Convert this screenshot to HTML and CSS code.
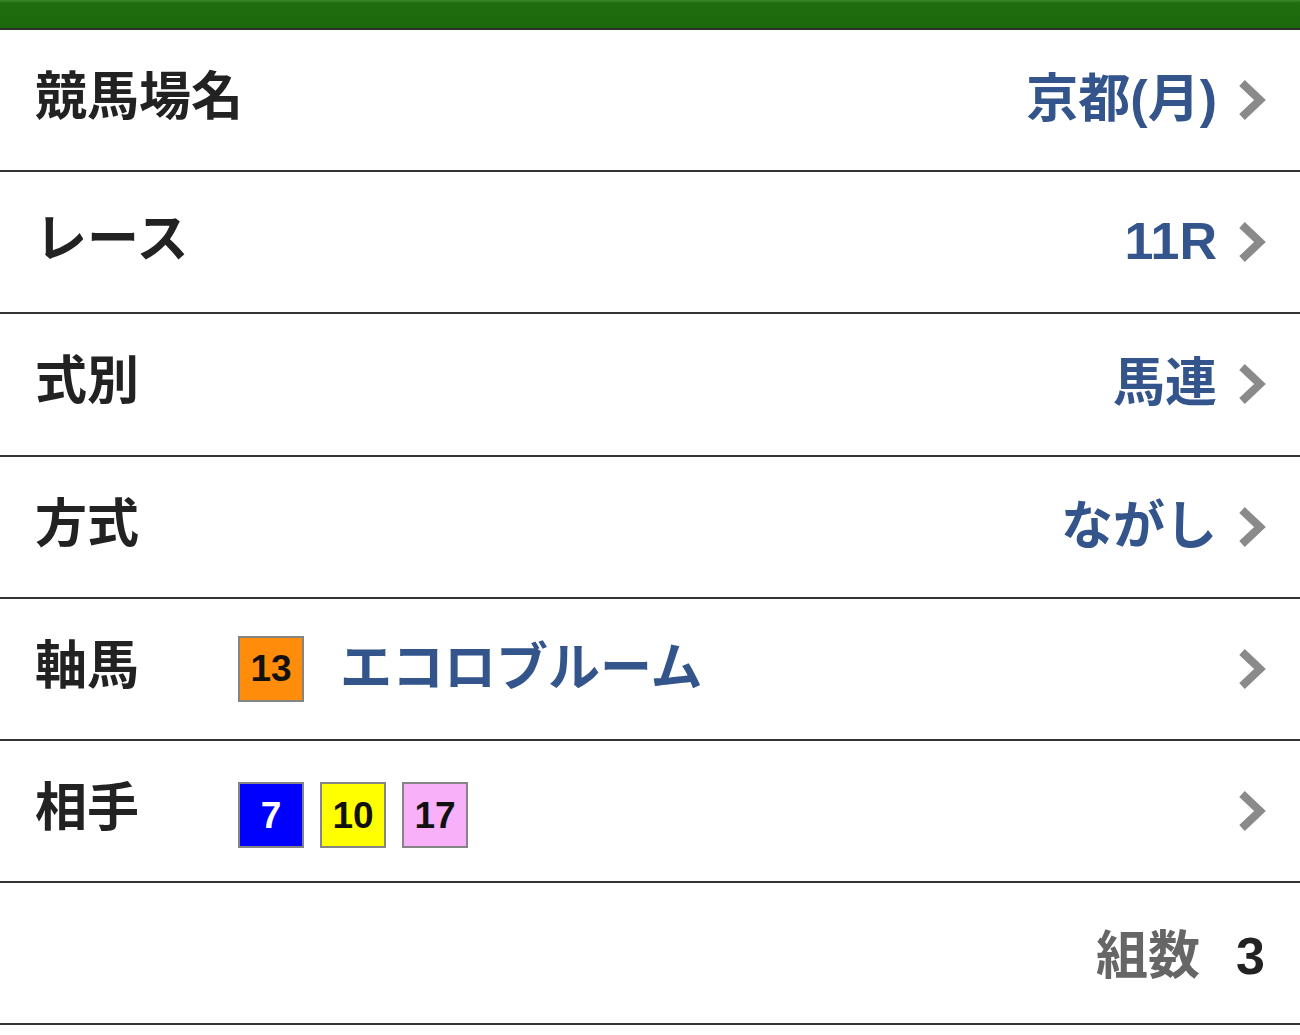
FILE: index.html
```html
<!DOCTYPE html>
<html lang="ja">
<head>
<meta charset="utf-8">
<title>馬券</title>
<link rel="stylesheet" href="styles.css">
</head>
<body>
<div class="topbar"></div>
<ul class="list">
  <li class="row">
    <span class="label">競馬場名</span>
    <span class="value">京都(月)</span>
    <svg class="chev" viewBox="0 0 28 42" width="28" height="42"><polyline points="4,4 22,21 4,38" /></svg>
  </li>
  <li class="row">
    <span class="label">レース</span>
    <span class="value">11R</span>
    <svg class="chev" viewBox="0 0 28 42" width="28" height="42"><polyline points="4,4 22,21 4,38" /></svg>
  </li>
  <li class="row">
    <span class="label">式別</span>
    <span class="value">馬連</span>
    <svg class="chev" viewBox="0 0 28 42" width="28" height="42"><polyline points="4,4 22,21 4,38" /></svg>
  </li>
  <li class="row">
    <span class="label">方式</span>
    <span class="value">ながし</span>
    <svg class="chev" viewBox="0 0 28 42" width="28" height="42"><polyline points="4,4 22,21 4,38" /></svg>
  </li>
  <li class="row">
    <span class="label">軸馬</span>
    <span class="badge badge-orange">13</span>
    <span class="horse-name">エコロブルーム</span>
    <svg class="chev chev-end" viewBox="0 0 28 42" width="28" height="42"><polyline points="4,4 22,21 4,38" /></svg>
  </li>
  <li class="row">
    <span class="label">相手</span>
    <div class="badges">
      <span class="badge badge-blue">7</span>
      <span class="badge badge-yellow">10</span>
      <span class="badge badge-pink">17</span>
    </div>
    <svg class="chev chev-end" viewBox="0 0 28 42" width="28" height="42"><polyline points="4,4 22,21 4,38" /></svg>
  </li>
  <li class="row row-total">
    <span class="total-label">組数</span>
    <span class="total-num">3</span>
  </li>
</ul>
</body>
</html>
```
FILE: styles.css
```css
html, body {
  margin: 0;
  padding: 0;
  background: #ffffff;
}

body {
  font-family: "Liberation Sans", "Noto Sans CJK JP", sans-serif;
  font-weight: 700;
  color: #222222;
}

.topbar {
  height: 28px;
  background: linear-gradient(#3c8a2c 0, #1f6d0f 3px, #1b690c 100%);
  border-bottom: 2px solid #2f2f2f;
}

.list {
  list-style: none;
  margin: 0;
  padding: 0;
}

.row {
  display: flex;
  align-items: center;
  height: 140.2px;
  padding: 0 35px;
  border-bottom: 2px solid #333333;
  box-sizing: content-box;
}

.label {
  flex: 0 0 203px;
  white-space: nowrap;
  font-size: 52px;
  line-height: 1;
  color: #222222;
  padding-bottom: 6px;
}

.value {
  margin-left: auto;
  white-space: nowrap;
  font-size: 52px;
  line-height: 1;
  color: #33558c;
  padding-bottom: 2px;
}

.chev {
  flex: 0 0 auto;
  margin-left: 21px;
  margin-right: -1px;
}

.chev polyline {
  fill: none;
  stroke: #8a8a8a;
  stroke-width: 8;
  stroke-linejoin: miter;
}

.chev-end {
  margin-left: auto;
}

.badges {
  display: flex;
  gap: 16px;
  padding-top: 8px;
}

.badge {
  display: flex;
  align-items: center;
  justify-content: center;
  width: 62px;
  height: 62px;
  border: 2px solid #858585;
  font-family: "Liberation Sans", sans-serif;
  font-size: 37px;
  line-height: 1;
  color: #111111;
}

.badge-orange { background: #ff8c0a; }
.badge-blue { background: #0000ff; color: #ffffff; }
.badge-yellow { background: #ffff00; }
.badge-pink { background: #f8b0f8; }

.horse-name {
  margin-left: 36px;
  white-space: nowrap;
  font-size: 52px;
  line-height: 1;
  color: #33558c;
  padding-bottom: 2px;
}

.row-total {
  justify-content: flex-end;
  gap: 36px;
  padding-top: 6px;
  height: 134.2px;
}

.total-label {
  font-size: 52px;
  line-height: 1;
  color: #666666;
}

.total-num {
  font-size: 52px;
  line-height: 1;
  color: #222222;
}
```
